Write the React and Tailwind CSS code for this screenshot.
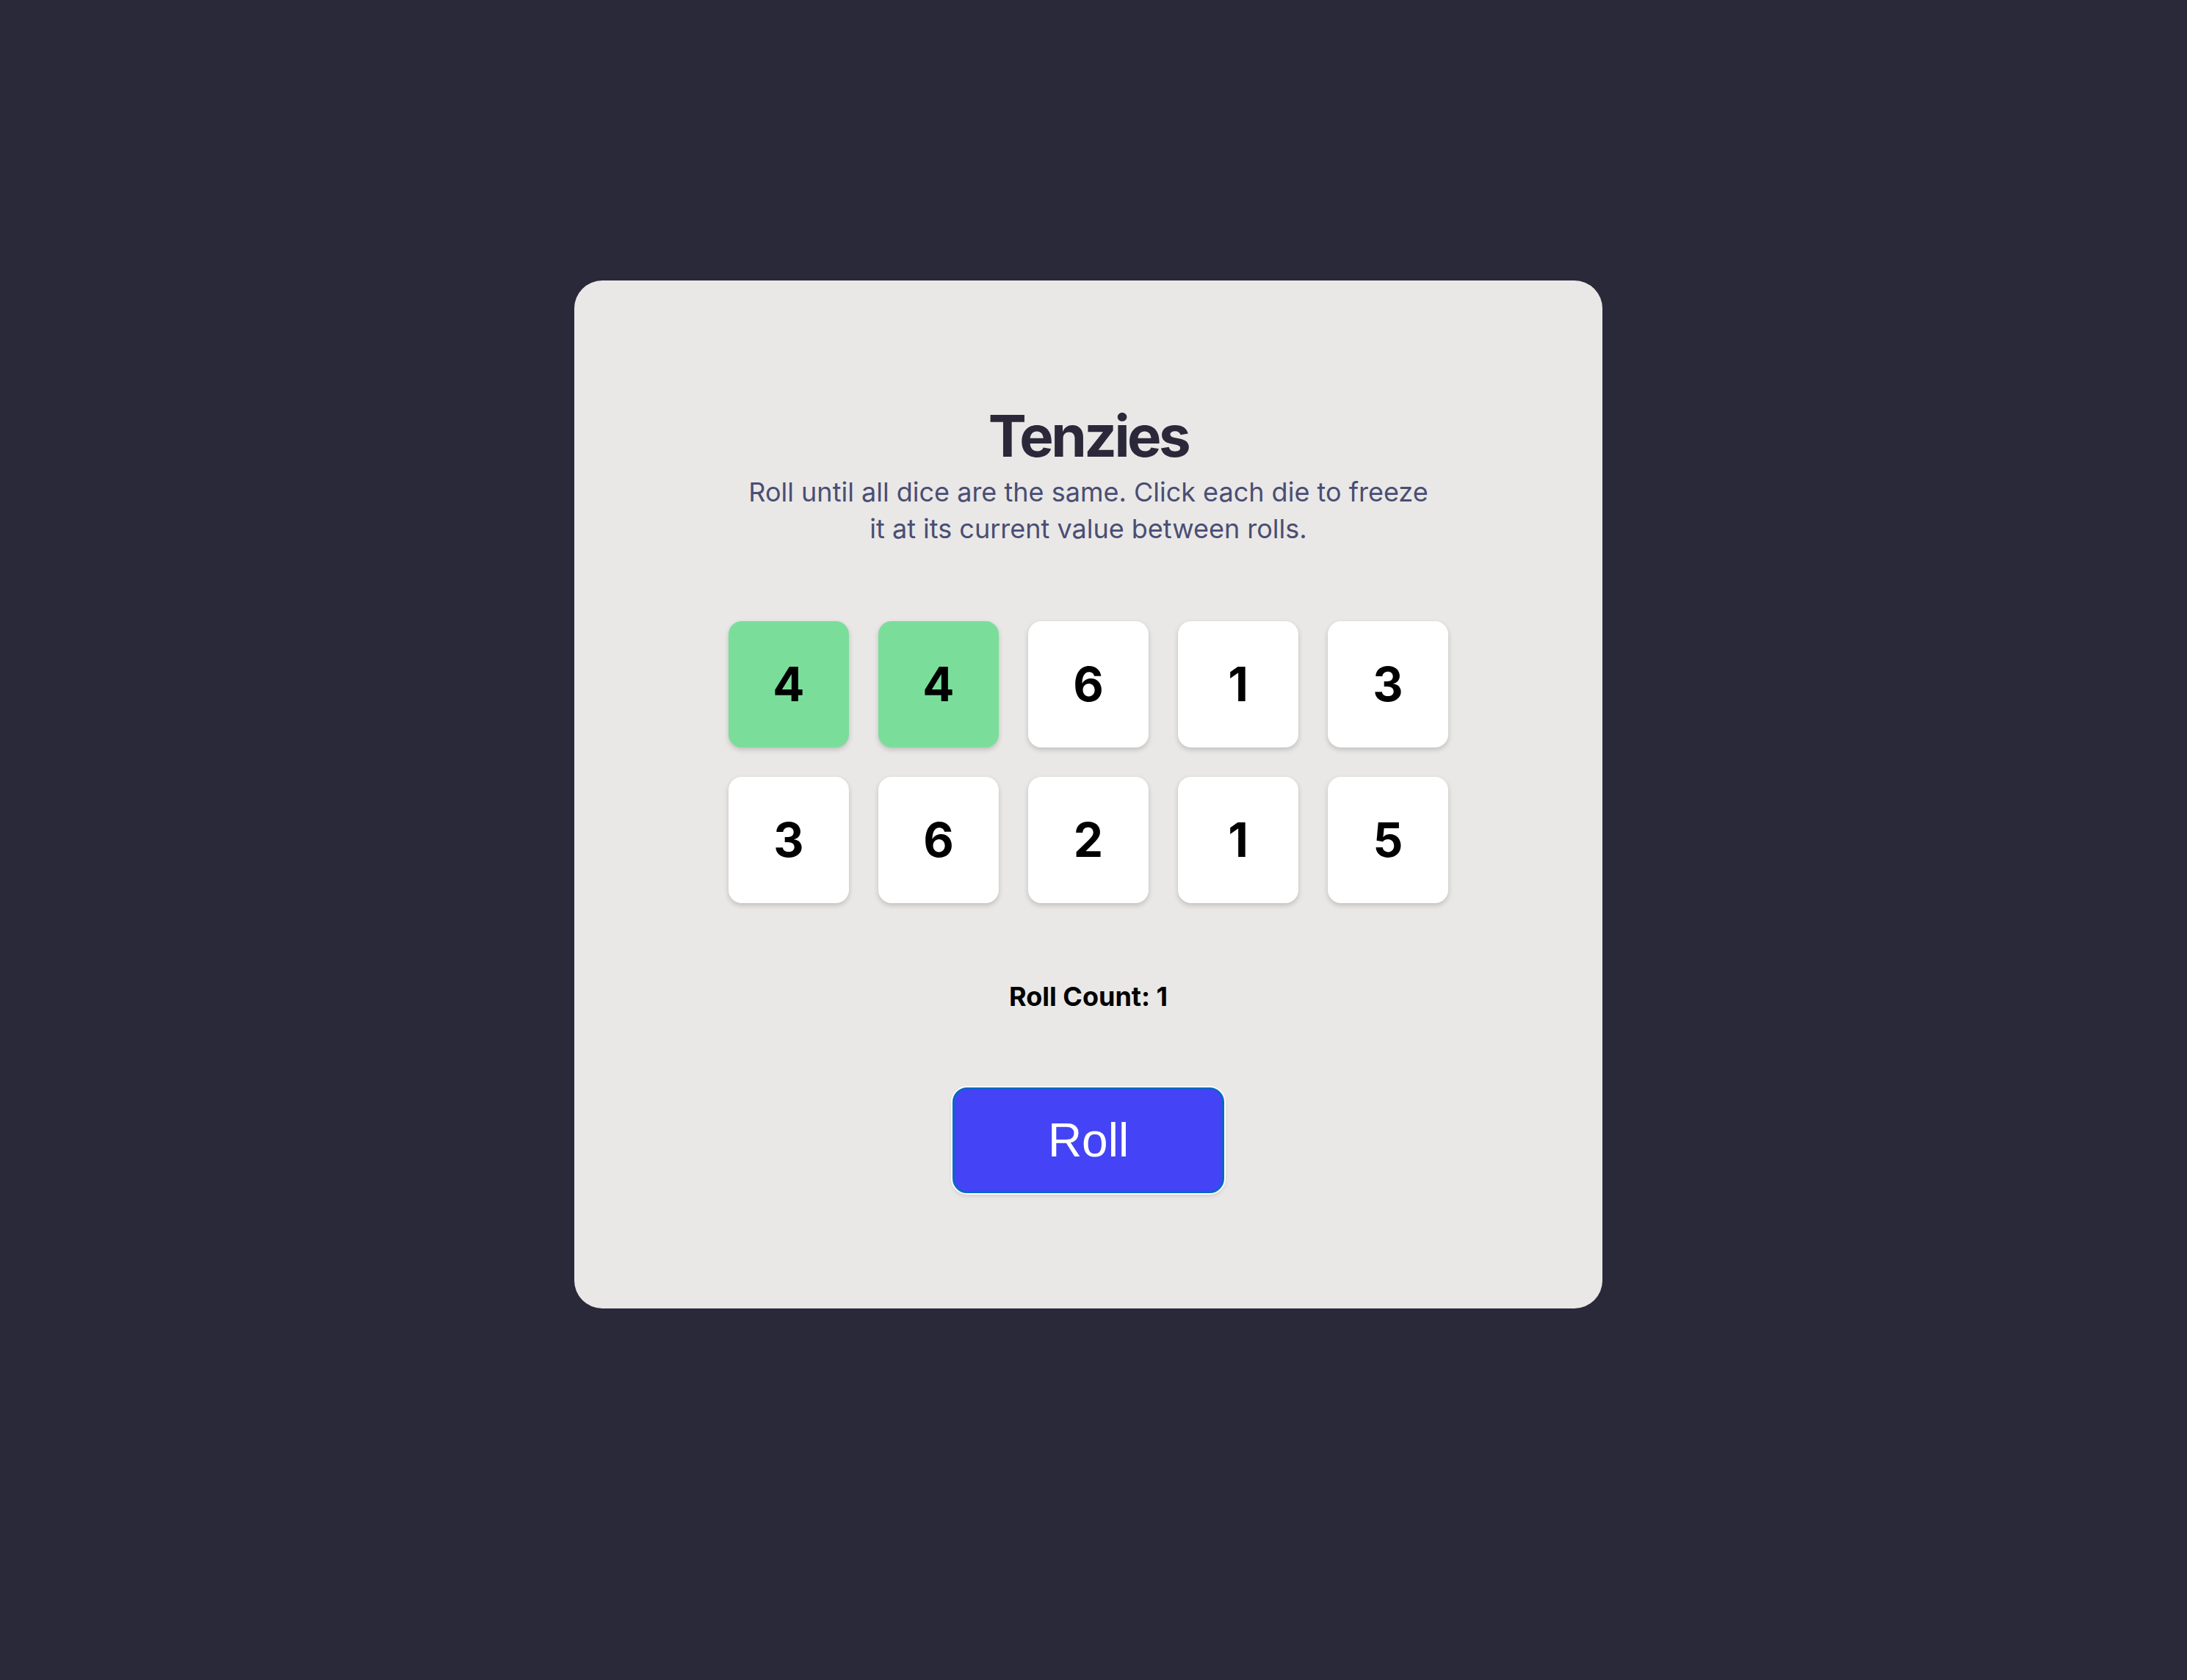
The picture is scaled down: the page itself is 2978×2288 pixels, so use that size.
import { useState } from 'react';

const initialDice = [
    { value: 4, held: true },
    { value: 4, held: true },
    { value: 6, held: false },
    { value: 1, held: false },
    { value: 3, held: false },
    { value: 3, held: false },
    { value: 6, held: false },
    { value: 2, held: false },
    { value: 1, held: false },
    { value: 5, held: false },
];

function Die({ value, held, onClick }) {
    return (
        <button
            onClick={onClick}
            className={`
        w-[164px] h-[172px] rounded-[18px] flex items-center justify-center
        text-[64px] font-bold text-black leading-none
        shadow-[0_3px_7px_rgba(0,0,0,0.18)]
        ${held ? 'bg-[#7ade9a]' : 'bg-white'}
      `}
        >
            {value}
        </button>
    );
}

export default function App() {
    const [dice, setDice] = useState(initialDice);
    const [rolls, setRolls] = useState(1);

    const hold = (i) =>
        setDice((d) => d.map((die, j) => (j === i ? { ...die, held: !die.held } : die)));

    const roll = () => {
        setDice((d) =>
            d.map((die) => (die.held ? die : { ...die, value: Math.ceil(Math.random() * 6) }))
        );
        setRolls((r) => r + 1);
    };

    return (
        <div className="min-h-screen bg-[#2a2939] flex justify-center pt-[382px] pr-[14px] font-['Inter',sans-serif]">
            <main className="w-[1400px] h-[1400px] rounded-[38px] bg-[#e9e8e6] flex flex-col items-center pt-[173px]">
                {/* Title */}
                <h1 className="text-[78px] font-bold leading-none text-[#2b283a] tracking-[-0.045em]">
                    Tenzies
                </h1>
                <p className="mt-[12px] w-[940px] text-center text-[36px] leading-[50px] text-[#4a4e74]">
                    Roll until all dice are the same. Click each die to freeze it at its
                    current value between rolls.
                </p>

                {/* Dice */}
                <div className="mt-[101px] grid grid-cols-5 gap-[40px]">
                    {dice.map((die, i) => (
                        <Die key={i} value={die.value} held={die.held} onClick={() => hold(i)} />
                    ))}
                </div>

                <p className="mt-[109px] text-[36px] font-bold leading-none text-black">
                    Roll Count: {rolls}
                </p>

                <button
                    onClick={roll}
                    className="mt-[106px] w-[370px] h-[144px] rounded-[20px] bg-[#4444f6] border-[3px] border-[#0b66c8] ring-2 ring-white text-white text-[64px] font-['Liberation_Sans',Arial,sans-serif] shadow-[0_3px_6px_rgba(0,0,0,0.15)]"
                >
                    Roll
                </button>
            </main>
        </div>
    );
}
